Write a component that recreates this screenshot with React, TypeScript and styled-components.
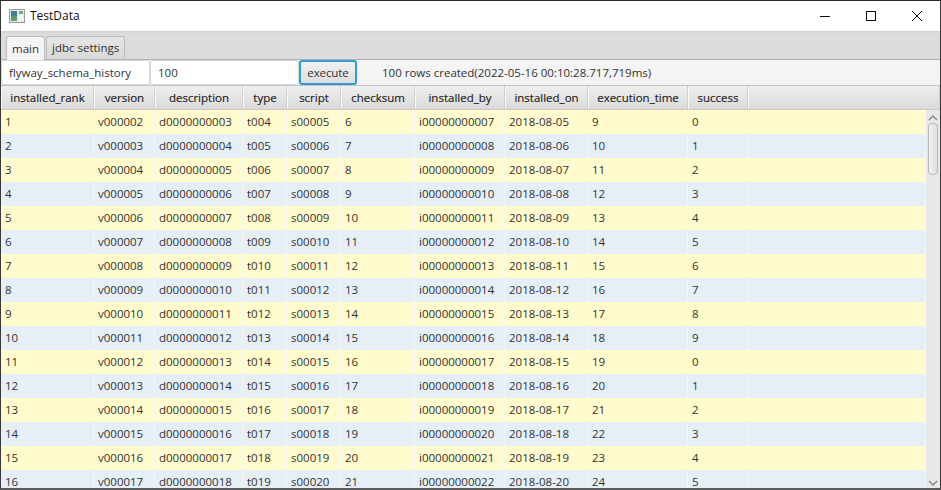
import React from 'react';
import styled, { createGlobalStyle } from 'styled-components';

const Global = createGlobalStyle`
  html, body { margin: 0; padding: 0; background: #fff; overflow: hidden; }
  * { box-sizing: border-box; }
`;

const Win = styled.div`
  width: 941px; height: 490px; display: flex; flex-direction: column; overflow: hidden;
  border: 1px solid #3a3a3a; border-bottom: 2px solid #5c5c5c; border-top-color: #2a2a2a;
  font-family: "Open Sans", "Noto Sans", sans-serif; font-size: 11.5px; color: #333;
`;
const TitleBar = styled.div`
  height: 30px; flex: none; display: flex; align-items: center; background: #fff; color: #111; font-size: 12px;
`;
const AppIcon = styled.svg`width: 16px; height: 16px; margin: 0 5px 0 8px; flex: none;`;
const Title = styled.span`flex: 1; padding-bottom: 1px;`;
const WinButton = styled.div`
  width: 46px; height: 30px; display: flex; align-items: center; justify-content: center;
`;
const TabBar = styled.div`
  height: 29px; flex: none; background: #dcdcdc; border-bottom: 1px solid #b0b0b0;
  display: flex; align-items: flex-end; gap: 1px; padding-left: 5px;
  box-shadow: inset 0 2px 2px -1px #cfcfcf;
`;
const Tab = styled.div<{ $active?: boolean }>`
  height: ${p => (p.$active ? 24 : 23)}px; padding: 0 5px 1px; display: flex; align-items: center;
  border: 1px solid #bcbcbc; border-bottom: none; border-radius: 3px 3px 0 0;
  background: ${p => (p.$active ? '#f4f4f4' : 'linear-gradient(#e6e6e6,#d8d8d8)')};
  margin-bottom: ${p => (p.$active ? -1 : 0)}px; position: relative;
`;
const ToolBar = styled.div`
  height: 26px; flex: none; background: #f4f4f4; display: flex; align-items: center; border-bottom: 1px solid #c4c4c4;
`;
const Input = styled.div<{ $w: number }>`
  width: ${p => p.$w}px; height: 25px; background: #fff; border: 1px solid #d8d8d8; border-radius: 3px;
  display: flex; align-items: center; padding: 0 0 1px 7px; flex: none;
`;
const ExecBtn = styled.div`
  width: 58px; height: 25px; border: 2px solid #2f9fd0; border-radius: 3px; margin-left: 0;
  background: linear-gradient(#f0f0f0,#dedede); display: flex; align-items: center; justify-content: center; flex: none;
  padding-bottom: 1px; letter-spacing: -0.1px;
`;
const Status = styled.span`margin-left: 25px; padding-bottom: 1px;`;
const Head = styled.div<{ $cols: string }>`
  height: 24px; flex: none; display: grid; grid-template-columns: ${p => p.$cols}; border-bottom: 1px solid #c8c8c8;
`;
const HeadCell = styled.div`
  background: linear-gradient(#efefef,#dadada); border-right: 1px solid #d0d0d0; border-left: 1px solid #f8f8f8;
  display: flex; align-items: center; justify-content: center; color: #222; -webkit-text-stroke: 0.15px #222; overflow: hidden;
`;
const Body = styled.div`flex: 1; display: flex; min-height: 0;`;
const Rows = styled.div`flex: 1; overflow: hidden;`;
const Row = styled.div<{ $cols: string; $odd: boolean }>`
  height: 24px; display: grid; grid-template-columns: ${p => p.$cols};
  background: ${p => (p.$odd ? '#fffbcc' : '#e6eef6')};
`;
const Cell = styled.div`
  padding: 0 0 2px 4px; display: flex; align-items: center; border-right: 1px solid #f4f6f4; white-space: nowrap; overflow: hidden;
`;
const ScrollBar = styled.div`
  width: 14px; flex: none; background: #e8e8e8; position: relative; display: flex; flex-direction: column; align-items: center;
`;
const Thumb = styled.div`
  width: 10px; height: 52px; margin-top: 2px; background: linear-gradient(90deg,#f2f2f2,#e0e0e0); border: 1px solid #b8b8b8; border-radius: 4px;
`;
const Arrow = styled.svg<{ $bottom?: boolean }>`
  width: 10px; height: 6px; flex: none; margin: ${p => (p.$bottom ? '0 0 2px' : '5px 0 0')};
`;
const Spacer = styled.div`flex: 1;`;

const headers = ['installed_rank','version','description','type','script','checksum','installed_by','installed_on','execution_time','success',''];
const cols = '93px 61px 88px 44px 54px 74px 90px 83px 100px 60px 1fr';
const p = (n: number, l: number) => String(n).padStart(l, '0');
const pad2 = (n: number) => String(n).padStart(2, '0');

const rows = Array.from({ length: 16 }, (_, i) => {
  const n = i + 1;
  return [String(n), 'v' + p(n + 1, 6), 'd' + p(n + 2, 10), 't' + p(n + 3, 3), 's' + p(n + 4, 5), String(n + 5),
    'i' + p(n + 6, 11), '2018-08-' + pad2(n + 4), String(n + 8), String((n - 1) % 10), ''];
});

export default function App() {
  return (
    <Win>
      <Global />
      <TitleBar>
        <AppIcon viewBox="0 0 16 16">
          <rect x="0.5" y="1.5" width="15" height="13" fill="#ececec" stroke="#9a9a9a" />
          <rect x="2" y="3" width="6" height="10" fill="#3f7f8f" />
          <rect x="2" y="8" width="6" height="5" fill="#5f9a6a" />
          <rect x="10" y="3" width="4" height="3" fill="#7aa88a" />
          <rect x="10" y="6" width="4" height="7" fill="#f2f2f2" />
        </AppIcon>
        <Title>TestData</Title>
        <WinButton><svg width="12" height="12" viewBox="0 0 12 12"><path d="M1 6.5h10" stroke="#111" /></svg></WinButton>
        <WinButton><svg width="12" height="12" viewBox="0 0 12 12"><rect x="1.5" y="1.5" width="9" height="9" fill="none" stroke="#111" /></svg></WinButton>
        <WinButton><svg width="12" height="12" viewBox="0 0 12 12"><path d="M1 1l10 10M11 1L1 11" stroke="#111" /></svg></WinButton>
      </TitleBar>
      <TabBar>
        <Tab $active>main</Tab>
        <Tab>jdbc settings</Tab>
      </TabBar>
      <ToolBar>
        <Input $w={149}>flyway_schema_history</Input>
        <Input $w={149}>100</Input>
        <ExecBtn>execute</ExecBtn>
        <Status>100 rows created(2022-05-16 00:10:28.717,719ms)</Status>
      </ToolBar>
      <Head $cols={cols}>
        {headers.map((h, i) => <HeadCell key={i}>{h}</HeadCell>)}
      </Head>
      <Body>
        <Rows>
          {rows.map((r, i) => (
            <Row key={i} $cols={cols} $odd={i % 2 === 0}>
              {r.map((c, j) => <Cell key={j}>{c}</Cell>)}
            </Row>
          ))}
        </Rows>
        <ScrollBar>
          <Arrow viewBox="0 0 10 6"><path d="M1 5l4-4 4 4" fill="none" stroke="#8a8a8a" strokeWidth="1.5" /></Arrow>
          <Thumb />
          <Spacer />
          <Arrow $bottom viewBox="0 0 10 6"><path d="M1 1l4 4 4-4" fill="none" stroke="#8a8a8a" strokeWidth="1.5" /></Arrow>
        </ScrollBar>
      </Body>
    </Win>
  );
}
